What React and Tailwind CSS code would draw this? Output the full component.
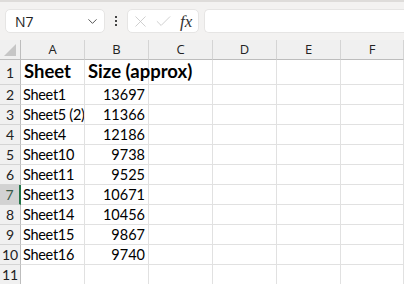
import { ChevronDown, X, Check } from "lucide-react";

const cols = ["A", "B", "C", "D", "E", "F"];

const rows = [
  ["Sheet1", "13697"],
  ["Sheet5 (2)", "11366"],
  ["Sheet4", "12186"],
  ["Sheet10", "9738"],
  ["Sheet11", "9525"],
  ["Sheet13", "10671"],
  ["Sheet14", "10456"],
  ["Sheet15", "9867"],
  ["Sheet16", "9740"],
  ["", ""],
];

const cellCls = "border-r border-b border-[#e1e1e1] overflow-hidden whitespace-nowrap";

export default function App() {
  return (
    <div className="w-[404px] h-[284px] overflow-hidden bg-white font-['Lato','Liberation_Sans',sans-serif]">
      {/* formula bar */}
      <div className="h-[40px] bg-[#f3f2f1] border-t-2 border-[#dedcda] flex items-start pt-[7px] pl-[5px]">
        <div className="w-[100px] h-[24px] bg-white rounded-[5px] border border-[#e6e5e4] flex items-center justify-between pl-[9px] pr-[4px]">
          <span className="text-[14px] text-[#222] font-['Open_Sans','Liberation_Sans',sans-serif]">N7</span>
          <ChevronDown size={15} strokeWidth={1.6} className="text-[#555]" />
        </div>
        <div className="w-[22px] h-[24px] flex flex-col items-center justify-center gap-[2px]">
          <span className="w-[2px] h-[2px] bg-[#444]" />
          <span className="w-[2px] h-[2px] bg-[#444]" />
          <span className="w-[2px] h-[2px] bg-[#444]" />
        </div>
        <div className="w-[72px] h-[24px] bg-white rounded-[5px] border border-[#e6e5e4] flex items-center pl-[3px] gap-[4px]">
          <X size={19} strokeWidth={1} className="text-[#c4c4c4]" />
          <Check size={19} strokeWidth={1} className="text-[#c4c4c4]" />
          <span className="ml-[3px] text-[17px] italic text-[#333] font-['Liberation_Serif',serif] leading-none">fx</span>
        </div>
        <div className="ml-[5px] flex-1 h-[24px] bg-white rounded-l-[5px] border border-r-0 border-[#e6e5e4]" />
      </div>

      {/* grid */}
      <div className="grid grid-cols-[21px_64px_64px_64px_64px_64px_63px] grid-rows-[20px_25px_repeat(10,20px)]">
        <div className="bg-[#f0f0f0] border-r border-b border-[#bdbdbd] relative">
          <svg className="absolute right-[4px] bottom-[3px]" width="12" height="12" viewBox="0 0 12 12">
            <polygon points="12,0 12,12 0,12" fill="#c6c6c6" />
          </svg>
        </div>
        {cols.map((c) => (
          <div
            key={c}
            className="bg-[#f0f0f0] border-r border-b border-[#bdbdbd] border-r-[#d4d4d4] flex items-center justify-center text-[13px] text-[#222] font-['Open_Sans','Liberation_Sans',sans-serif]"
          >
            {c}
          </div>
        ))}

        {/* row 1 */}
        <div className="bg-[#f0f0f0] border-r border-b border-[#d4d4d4] border-r-[#bdbdbd] flex items-center justify-center text-[14px] text-[#222]">1</div>
        <div className={`${cellCls} flex items-center pl-[3px] text-[18.5px] font-bold text-black`}>Sheet</div>
        <div className="border-r border-b border-[#e1e1e1] whitespace-nowrap flex items-center pl-[3px] text-[18.5px] font-bold text-black">Size (approx)</div>
        <div className={cellCls} />
        <div className={cellCls} />
        <div className={cellCls} />
        <div className={cellCls} />

        {rows.map(([name, size], i) => {
          const n = i + 2;
          const sel = n === 7;
          return [
            <div
              key={`h${n}`}
              className={
                sel
                  ? "bg-[#d2d2d2] border-b border-[#d4d4d4] border-r-2 border-r-[#217346] flex items-center justify-center text-[14px] text-[#3a5a48]"
                  : "bg-[#f0f0f0] border-r border-b border-[#d4d4d4] border-r-[#bdbdbd] flex items-center justify-center text-[14px] text-[#222]"
              }
            >
              {n}
            </div>,
            <div key={`a${n}`} className={`${cellCls} flex items-center pl-[2px] text-[14.5px] tracking-[-0.3px] text-black`}>{name}</div>,
            <div key={`b${n}`} className={`${cellCls} flex items-center justify-end pr-[3px] text-[14.5px] text-black`}>{size}</div>,
            <div key={`c${n}`} className={cellCls} />,
            <div key={`d${n}`} className={cellCls} />,
            <div key={`e${n}`} className={cellCls} />,
            <div key={`f${n}`} className={cellCls} />,
          ];
        })}
      </div>
    </div>
  );
}
